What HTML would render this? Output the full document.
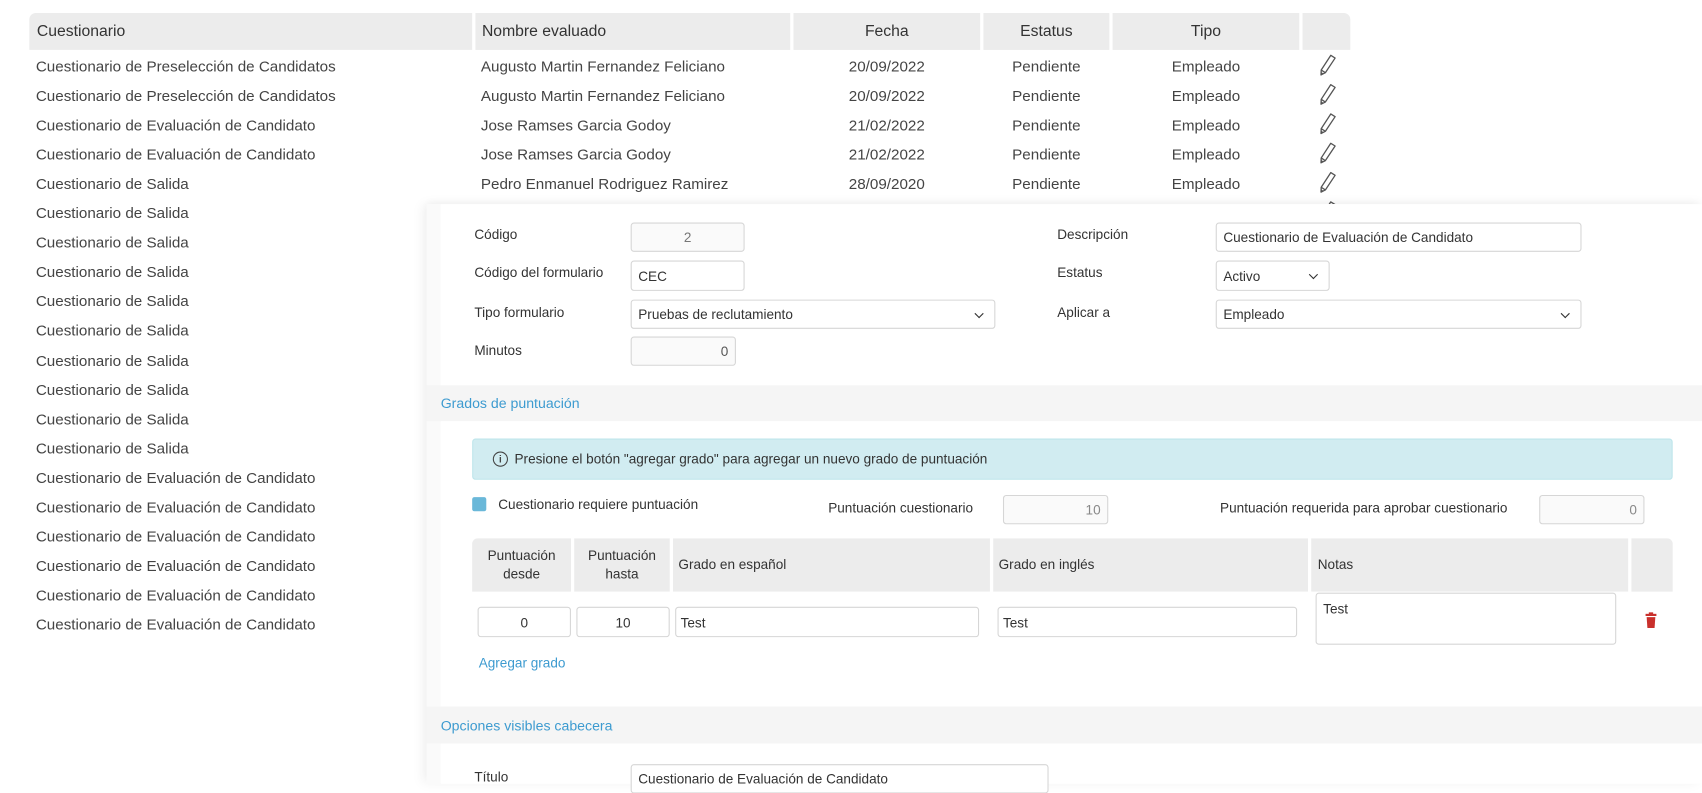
<!DOCTYPE html>
<html><head><meta charset="utf-8"><style>
*{box-sizing:border-box;margin:0;padding:0}
html,body{width:1702px;height:784px;overflow:hidden;background:#fff}
#w{position:absolute;left:0;top:0;width:1568px;height:722px;transform:scale(1.08546);transform-origin:0 0;font-family:"Liberation Sans",sans-serif;color:#444}
.a{position:absolute;white-space:nowrap}
.th{position:absolute;top:12px;height:34px;background:#ececec;font-size:14.5px;color:#333;line-height:34px}
.r{position:absolute;font-size:14px;line-height:16px;color:#444;white-space:nowrap}
.c{text-align:center}
.lbl{position:absolute;font-size:12.5px;color:#333;white-space:nowrap;line-height:14px}
.in{position:absolute;border:1px solid #d6d6d6;border-radius:3px;background:#fff;font-size:12.5px;color:#333;line-height:26px;padding:0 6px;white-space:nowrap}
.dis{background:#fafafa;color:#777}
.sel::after{content:"";position:absolute;right:11px;top:9px;width:5px;height:5px;border-right:1.6px solid #333;border-bottom:1.6px solid #333;transform:rotate(45deg)}
.sec{position:absolute;left:393px;width:1175px;background:#f5f5f5;color:#3d9bd0;font-size:13px}
.gh{position:absolute;top:496px;height:49px;background:#ececec;font-size:12.5px;color:#333}
</style></head><body><div id="w">
<div class="th" style="left:27px;width:408px;padding-left:7px;border-top-left-radius:6px">Cuestionario</div>
<div class="th" style="left:438px;width:290px;padding-left:6px">Nombre evaluado</div>
<div class="th c" style="left:731px;width:172px">Fecha</div>
<div class="th c" style="left:906px;width:116px">Estatus</div>
<div class="th c" style="left:1025px;width:172px">Tipo</div>
<div class="th" style="left:1200px;width:44px;border-top-right-radius:6px"></div>
<div id="rows"></div>
<script>
var q=["Cuestionario de Preselección de Candidatos","Cuestionario de Preselección de Candidatos","Cuestionario de Evaluación de Candidato","Cuestionario de Evaluación de Candidato"];
for(var i=0;i<10;i++)q.push("Cuestionario de Salida");
for(var i=0;i<6;i++)q.push("Cuestionario de Evaluación de Candidato");
var n=[["Augusto Martin Fernandez Feliciano","20/09/2022"],["Augusto Martin Fernandez Feliciano","20/09/2022"],["Jose Ramses Garcia Godoy","21/02/2022"],["Jose Ramses Garcia Godoy","21/02/2022"],["Pedro Enmanuel Rodriguez Ramirez","28/09/2020"]];
var h="";
var pen='<svg width="20" height="22" viewBox="0 0 20 22"><path d="M13 2 L17 4.5 L8 18 L4 20 L4.2 15.5 Z M4.2 15.5 L8 18" fill="none" stroke="#555" stroke-width="1.2" stroke-linejoin="round"/><path d="M4 20 L4.1 17.3 L6.2 18.7 Z" fill="#555"/></svg>';
for(var i=0;i<20;i++){var y=53+i*27.05;
h+='<div class="r" style="left:33px;top:'+y+'px">'+q[i]+'</div>';
if(i<6){var d=n[Math.min(i,4)];
h+='<div class="r" style="left:443px;top:'+y+'px">'+d[0]+'</div><div class="r c" style="left:731px;width:172px;top:'+y+'px">'+d[1]+'</div><div class="r c" style="left:906px;width:116px;top:'+y+'px">Pendiente</div><div class="r c" style="left:1025px;width:172px;top:'+y+'px">Empleado</div><div class="a" style="left:1213px;top:'+(y-4)+'px">'+pen+'</div>';}
}
document.getElementById('rows').innerHTML=h;
</script>
<div class="a" style="left:393px;top:188px;width:1175px;height:534px;background:#fafafa;box-shadow:-4px 0 10px rgba(0,0,0,.05), 0 -3px 8px rgba(0,0,0,.04)"></div>
<div class="a" style="left:406px;top:188px;width:1162px;height:167px;background:#fff"></div>
<div class="lbl" style="left:437px;top:209px">Código</div>
<div class="in dis" style="left:581px;top:205px;width:105px;height:27px;text-align:center">2</div>
<div class="lbl" style="left:437px;top:244px">Código del formulario</div>
<div class="in" style="left:581px;top:240px;width:105px;height:28px;line-height:28px">CEC</div>
<div class="lbl" style="left:437px;top:281px">Tipo formulario</div>
<div class="in sel" style="left:581px;top:276px;width:336px;height:27px">Pruebas de reclutamiento</div>
<div class="lbl" style="left:437px;top:316px">Minutos</div>
<div class="in dis" style="left:581px;top:310px;width:97px;height:27px;text-align:right;color:#555">0</div>
<div class="lbl" style="left:974px;top:209px">Descripción</div>
<div class="in" style="left:1120px;top:205px;width:337px;height:27px">Cuestionario de Evaluación de Candidato</div>
<div class="lbl" style="left:974px;top:244px">Estatus</div>
<div class="in sel" style="left:1120px;top:240px;width:105px;height:28px;line-height:28px">Activo</div>
<div class="lbl" style="left:974px;top:281px">Aplicar a</div>
<div class="in sel" style="left:1120px;top:276px;width:337px;height:27px">Empleado</div>
<div class="sec" style="top:355px;height:33px;line-height:34px;padding-left:13px">Grados de puntuación</div>
<div class="a" style="left:406px;top:388px;width:1162px;height:263px;background:#fff"></div>
<div class="a" style="left:435px;top:404px;width:1106px;height:38px;background:#d1ecf1;border:1px solid #bee5eb;border-radius:3px;font-size:12.5px;color:#333;line-height:36px;padding-left:38px">Presione el botón "agregar grado" para agregar un nuevo grado de puntuación</div>
<div class="a" style="left:454px;top:416px;width:14px;height:14px;border:1.2px solid #444;border-radius:50%;font-size:9px;line-height:12px;text-align:center;color:#444;font-weight:bold">i</div>
<div class="a" style="left:435px;top:458px;width:13px;height:13px;background:#6ab8d9;border-radius:2px"></div>
<div class="lbl" style="left:459px;top:458px">Cuestionario requiere puntuación</div>
<div class="lbl" style="left:763px;top:461px">Puntuación cuestionario</div>
<div class="in dis" style="left:924px;top:456px;width:97px;height:27px;text-align:right;color:#888">10</div>
<div class="lbl" style="left:1124px;top:461px">Puntuación requerida para aprobar cuestionario</div>
<div class="in dis" style="left:1418px;top:456px;width:97px;height:27px;text-align:right;color:#888">0</div>
<div class="gh c" style="left:435px;width:91px;padding-top:8px;line-height:17px;border-top-left-radius:5px">Puntuación<br>desde</div>
<div class="gh c" style="left:529px;width:88px;padding-top:8px;line-height:17px">Puntuación<br>hasta</div>
<div class="gh" style="left:620px;width:292px;line-height:49px;padding-left:5px">Grado en español</div>
<div class="gh" style="left:915px;width:290px;line-height:49px;padding-left:5px">Grado en inglés</div>
<div class="gh" style="left:1208px;width:292px;line-height:49px;padding-left:6px">Notas</div>
<div class="gh" style="left:1503px;width:38px;border-top-right-radius:5px"></div>
<div class="in c" style="left:440px;top:559px;width:86px;height:28px;line-height:28px">0</div>
<div class="in c" style="left:531px;top:559px;width:86px;height:28px;line-height:28px">10</div>
<div class="in" style="left:622px;top:559px;width:280px;height:28px;line-height:28px;padding-left:4px">Test</div>
<div class="in" style="left:919px;top:559px;width:276px;height:28px;line-height:28px;padding-left:4px">Test</div>
<div class="in" style="left:1212px;top:546px;width:277px;height:48px;line-height:28px;padding-left:6px">Test</div>
<svg class="a" style="left:1515px;top:564px" width="12" height="15" viewBox="0 0 12 15"><rect x="1" y="1.5" width="10" height="2" fill="#c9302c"/><rect x="4" y="0" width="4" height="2" fill="#c9302c"/><path d="M2 4.5 H10 L9.3 14.5 H2.7 Z" fill="#c9302c"/></svg>
<div class="a" style="left:441px;top:604px;font-size:12.5px;color:#3d9bd0">Agregar grado</div>
<div class="sec" style="top:651px;height:34px;line-height:36px;padding-left:13px">Opciones visibles cabecera</div>
<div class="a" style="left:406px;top:685px;width:1162px;height:37px;background:#fff"></div>
<div class="lbl" style="left:437px;top:709px">Título</div>
<div class="in" style="left:581px;top:704px;width:385px;height:27px">Cuestionario de Evaluación de Candidato</div>
</div></body></html>
